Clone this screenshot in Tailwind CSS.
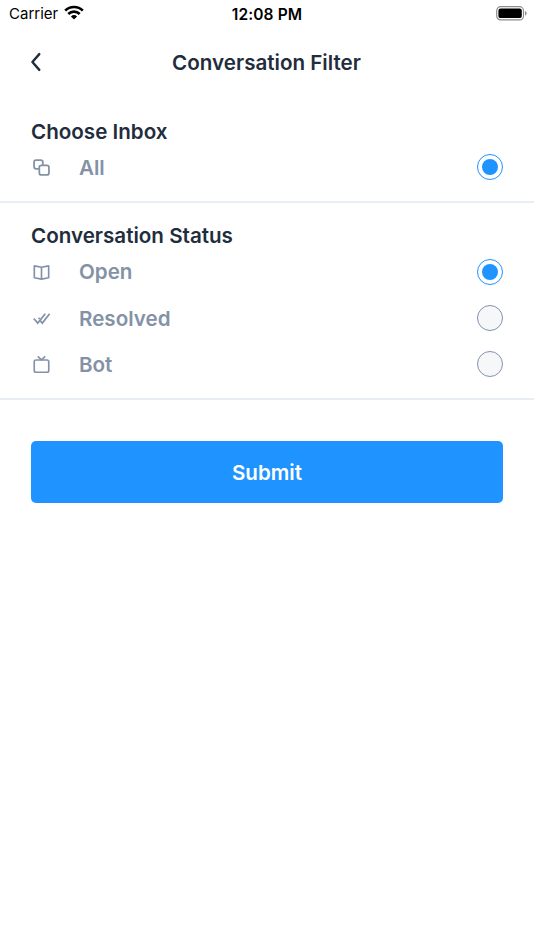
<!DOCTYPE html>
<html lang="en">
<head>
  <meta charset="UTF-8">
  <meta name="viewport" content="width=device-width, initial-scale=1.0">
  <title>Conversation Filter</title>
  <script src="https://cdn.jsdelivr.net/npm/@tailwindcss/browser@4"></script>
</head>
<body class="bg-white font-['Inter',sans-serif] text-[#1f2d3d] min-h-screen">
  <!-- Status bar -->
  <div class="grid grid-cols-3 items-center h-[27px] pl-[9px] pr-[7px] text-black">
    <div class="flex items-center gap-[6px]">
      <span class="text-[15px] leading-none">Carrier</span>
      <svg class="w-[20px] h-[15px] -mt-[2px]" viewBox="0 0 20 15" fill="none" stroke="#000" stroke-width="2.7">
        <path d="M1.2 5.6a12.6 12.6 0 0 1 17.6 0"/>
        <path d="M4.3 9a8.2 8.2 0 0 1 11.4 0"/>
        <path d="M10 14.6 6.9 11.5a4.5 4.5 0 0 1 6.2 0z" fill="#000" stroke="none"/>
      </svg>
    </div>
    <span class="-ml-[2px] pt-[2px] text-center text-[15.5px] leading-none font-semibold tracking-[0.1px]">12:08 PM</span>
    <svg class="justify-self-end w-[31px] h-[15px]" viewBox="0 0 31 15" fill="none">
      <rect x=".7" y=".7" width="26.8" height="13.2" rx="4" stroke="#8c8c8c" stroke-width="1.2"/>
      <rect x="2.4" y="2.5" width="23.4" height="9.6" rx="2.2" fill="#000"/>
      <path d="M29 5v4.6c1-.4 1.6-1.3 1.6-2.3S30 5.4 29 5z" fill="#8c8c8c"/>
    </svg>
  </div>

  <!-- Header -->
  <header class="grid grid-cols-[40px_1fr_40px] items-center h-[70px] px-[24px]">
    <button type="button" aria-label="Back" class="flex pl-[6px]">
      <svg class="w-[12px] h-[20px]" viewBox="0 0 12 20" fill="none" stroke="#1f2d3d" stroke-width="2.4" stroke-linecap="round" stroke-linejoin="round">
        <path d="M9.3 2.1 2.4 10l6.9 7.9"/>
      </svg>
    </button>
    <h1 class="-ml-px pt-[2px] text-center text-[20.6px] font-semibold">Conversation Filter</h1>
  </header>

  <main>
    <!-- Inbox -->
    <section class="border-b-2 border-[#e8eef5] pt-[21px] pb-[11px]">
      <h2 class="px-[31px] text-[20.6px] leading-[28px] font-semibold">Choose Inbox</h2>
      <label class="flex items-center h-[46px] -mt-[2px] px-[31px]">
        <svg class="w-[21px] h-[21px]" viewBox="0 0 24 24" fill="none" stroke="#8492a6" stroke-width="2">
          <path d="M9 13.500H5.800A2.300 2.300 0 0 1 3.500 11.200V5.800A2.300 2.300 0 0 1 5.800 3.500h5.400A2.300 2.300 0 0 1 13.500 5.800V9"/>
          <rect x="9.500" y="9.500" width="11" height="11" rx="2.300"/>
        </svg>
        <span class="ml-[27px] flex-1 pt-[2px] text-[20.6px] font-semibold text-[#8492a6]">All</span>
        <span class="flex items-center justify-center size-[26px] rounded-full border-[1.5px] border-[#1f93ff]">
          <span class="size-[16px] rounded-full bg-[#1f93ff]"></span>
        </span>
      </label>
    </section>

    <!-- Status -->
    <section class="border-b-2 border-[#e8ecf6] pt-[19px] pb-[11px]">
      <h2 class="px-[31px] text-[20.6px] leading-[28px] font-semibold">Conversation Status</h2>
      <label class="flex items-center h-[46px] -mt-px px-[31px]">
        <svg class="w-[21px] h-[21px]" viewBox="0 0 24 24" fill="none" stroke="#8492a6" stroke-width="1.9" stroke-linejoin="round">
          <path d="M12 6 3.800 4.500v13.500L12 19.500l8.200-1.500V4.500z"/>
          <path d="M12 6v13.500"/>
        </svg>
        <span class="ml-[27px] flex-1 pt-px text-[20.6px] font-semibold text-[#8492a6]">Open</span>
        <span class="flex items-center justify-center size-[26px] rounded-full border-[1.5px] border-[#1f93ff]">
          <span class="size-[16px] rounded-full bg-[#1f93ff]"></span>
        </span>
      </label>
      <label class="flex items-center h-[46px] px-[31px]">
        <svg class="w-[21px] h-[21px]" viewBox="0 0 24 24" fill="none" stroke="#8492a6" stroke-width="2">
          <path d="M3.200 12l4.500 5.300L16.300 6.500"/>
          <path d="M10.700 14.800l2.200 2.500L21.300 6.500"/>
          <path d="M8.700 11.200l1.200 1.400"/>
        </svg>
        <span class="ml-[27px] flex-1 pt-[2px] text-[20.6px] font-semibold text-[#8492a6]">Resolved</span>
        <span class="size-[26px] rounded-full border-[1.5px] border-[#8492b0] bg-[#f6f7f9]"></span>
      </label>
      <label class="flex items-center h-[46px] px-[31px]">
        <svg class="w-[21px] h-[21px]" viewBox="0 0 24 24" fill="none" stroke="#8492a6" stroke-width="1.9">
          <rect x="3.700" y="6.900" width="16.600" height="14" rx="2"/>
          <path d="M7.700 2.800l4.300 3.900L16.300 2.800"/>
        </svg>
        <span class="ml-[27px] flex-1 pt-[2px] text-[20.6px] font-semibold text-[#8492a6]">Bot</span>
        <span class="size-[26px] rounded-full border-[1.5px] border-[#8492b0] bg-[#f6f7f9]"></span>
      </label>
    </section>

    <div class="px-[31px] pt-[41px]">
      <button type="submit" class="block w-full h-[62px] rounded-[5px] bg-[#1f93ff] pt-[2px] text-[20.6px] font-semibold text-white">Submit</button>
    </div>
  </main>
</body>
</html>
